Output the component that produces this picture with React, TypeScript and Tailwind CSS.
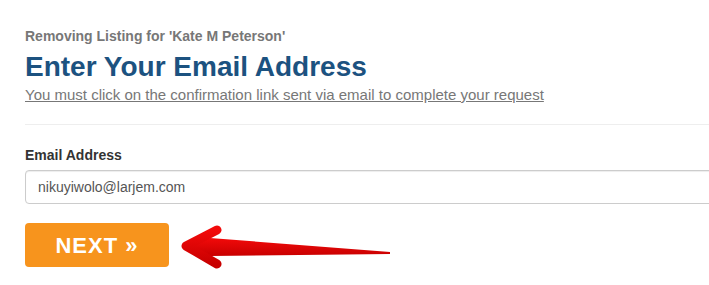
export default function App() {
  return (
    <div className="w-full h-[285px] overflow-hidden bg-white font-['Liberation_Sans',Arial,sans-serif]">
      <div className="pl-[25px] pt-[27px]">
        <p className="text-[14px] leading-[18px] font-bold text-[#777]">
          Removing Listing for 'Kate M Peterson'
        </p>
        <h1 className="mt-[6px] text-[28px] leading-[31px] font-bold text-[#1c5280]">
          Enter Your Email Address
        </h1>
        <p className="mt-[3px] text-[15px] leading-[20px] text-[#777]">
          <a href="#" className="underline">
            You must click on the confirmation link sent via email to complete your request
          </a>
        </p>

        <div className="mt-[19px] border-t border-[#eee]" />

        <label className="mt-[20px] block text-[14px] leading-[20px] font-bold text-[#333]">
          Email Address
        </label>
        <input
          type="text"
          defaultValue="nikuyiwolo@larjem.com"
          className="mt-[5px] block h-[34px] w-[720px] rounded-[4px] border border-[#ccc] px-[12px] text-[14px] text-[#555] shadow-[inset_0_1px_1px_rgba(0,0,0,0.075)] outline-none"
        />

        <div className="mt-[19px] flex items-start">
          <button className="h-[44px] w-[144px] shrink-0 rounded-[4px] bg-[#f7941d] text-[22px] font-bold tracking-[1px] text-white">
            NEXT »
          </button>
          <svg width="215" height="50" viewBox="0 0 215 50" className="ml-[11px] mt-[-1px] shrink-0">
            <defs>
              <linearGradient id="red" x1="0" y1="0" x2="0" y2="1">
                <stop offset="0" stopColor="#f20a0a" />
                <stop offset="1" stopColor="#c80000" />
              </linearGradient>
            </defs>
            <polygon points="8,24 30,16 210,30 210,32 30,34" fill="url(#red)" />
            <polyline
              points="37,8 6,24 37,42"
              fill="none"
              stroke="url(#red)"
              strokeWidth="9"
              strokeLinecap="round"
              strokeLinejoin="round"
            />
          </svg>
        </div>
      </div>
    </div>
  );
}
